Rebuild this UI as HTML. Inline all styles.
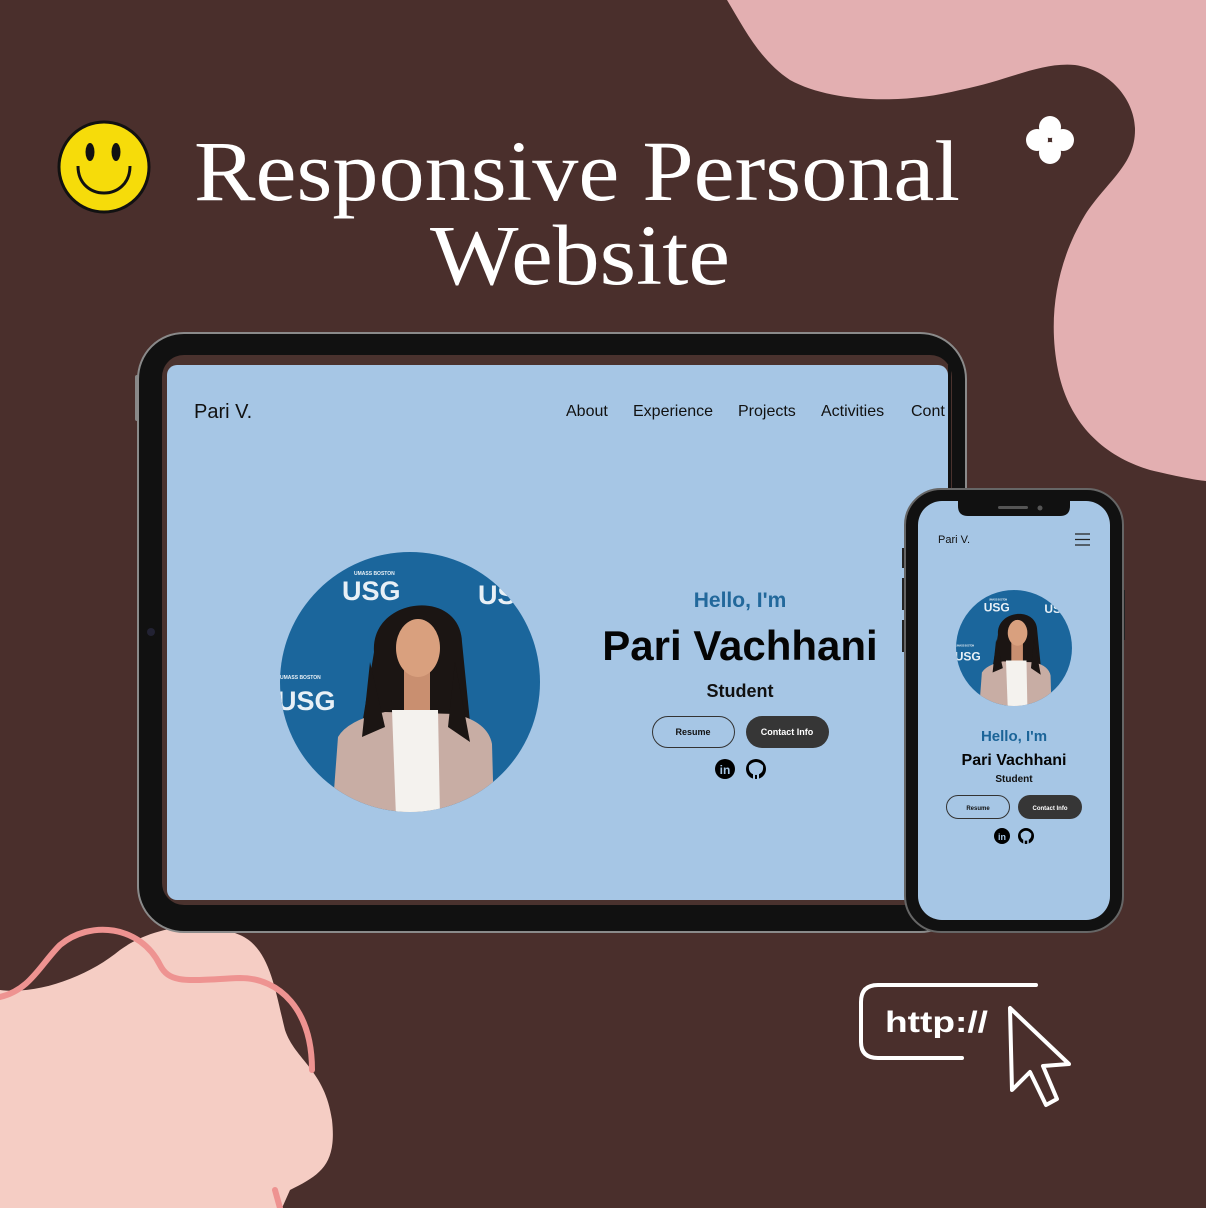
<!DOCTYPE html>
<html><head><meta charset="utf-8"><style>
html,body{margin:0;padding:0;background:#4a2f2c;}
svg{display:block}
</style></head><body>
<svg width="1206" height="1208" viewBox="0 0 1206 1208" xmlns="http://www.w3.org/2000/svg">
<defs>
<clipPath id="cb"><circle cx="0" cy="0" r="130"/></clipPath>
<g id="person">
<g clip-path="url(#cb)">
<rect x="-130" y="-130" width="260" height="260" fill="#1b669c"/>
<g fill="#e8f0f6" font-family="Liberation Sans, sans-serif" font-weight="bold">
<text x="-68" y="-82" font-size="27">USG</text>
<text x="-56" y="-107" font-size="5">UMASS BOSTON</text>
<text x="68" y="-78" font-size="27">USG</text>
<text x="-133" y="28" font-size="27">USG</text>
<text x="-130" y="-3" font-size="5">UMASS BOSTON</text>
</g>
<path d="M-36,-30 C-40,-85 50,-95 52,-40 L62,60 L-50,55 Z" fill="#1b1513"/>
<rect x="-6" y="-12" width="26" height="40" fill="#c98f70"/>
<ellipse cx="8" cy="-34" rx="22" ry="29" fill="#d9a07e"/>
<path d="M-78,135 L-72,55 Q-62,38 -25,30 L45,32 Q78,40 82,62 L84,135 Z" fill="#c8ada4"/>
<path d="M-18,28 L28,28 L30,135 L-14,135 Z" fill="#f4f2ee"/>
<path d="M-40,-20 L-48,55 L-25,45 Z M45,-20 L60,60 L38,45 Z" fill="#1b1513"/>
</g>
</g>
</defs>

<path d="M727,0 C745,30 760,60 790,80 C830,102 900,105 960,90 C1010,80 1040,62 1075,65 C1110,70 1135,100 1135,130 C1135,165 1108,180 1085,215 C1055,265 1048,320 1058,370 C1068,420 1100,455 1150,470 C1175,476 1195,480 1206,481 L1206,0 Z" fill="#e3afb1"/>
<path d="M0,990 C40,995 90,975 120,950 C150,928 200,918 240,935 C270,948 275,990 285,1030 C295,1060 325,1070 332,1120 C337,1165 320,1175 290,1190 L282,1208 L0,1208 Z" fill="#f5cdc4"/>
<path d="M0,997 C30,990 40,965 60,945 C90,920 140,925 160,965 C170,985 190,980 240,978 C280,978 312,1010 312,1070" fill="none" stroke="#ee9391" stroke-width="6" stroke-linecap="round"/>
<path d="M275,1190 L280,1208" fill="none" stroke="#ee9391" stroke-width="6" stroke-linecap="round"/>

<circle cx="104" cy="167" r="45" fill="#f6dc0a" stroke="#111" stroke-width="3"/>
<ellipse cx="90" cy="152" rx="4.5" ry="9" fill="#111"/>
<ellipse cx="116" cy="152" rx="4.5" ry="9" fill="#111"/>
<path d="M78,166 C78,202 130,202 130,166" fill="none" stroke="#111" stroke-width="3"/>

<g fill="#fff">
<circle cx="1050" cy="127" r="11"/>
<circle cx="1050" cy="153" r="11"/>
<circle cx="1037" cy="140" r="11"/>
<circle cx="1063" cy="140" r="11"/>
</g>

<g fill="#fff" font-family="Liberation Serif, serif" font-size="86" text-anchor="middle">
<text x="577" y="200" textLength="766" lengthAdjust="spacingAndGlyphs">Responsive Personal</text>
<text x="580" y="284" textLength="300" lengthAdjust="spacingAndGlyphs">Website</text>
</g>

<rect x="135" y="375" width="6" height="46" rx="2" fill="#888"/>
<rect x="138" y="333" width="828" height="599" rx="46" fill="#111" stroke="#8a8a8a" stroke-width="2"/>
<rect x="162" y="355" width="790" height="550" rx="22" fill="#4a322e"/>
<rect x="167" y="365" width="781" height="535" rx="10" fill="#a6c6e5"/>
<circle cx="151" cy="632" r="4" fill="#223"/>
<g font-family="Liberation Sans, sans-serif">
<text x="194" y="418" font-size="20" fill="#111">Pari V.</text>
<g font-size="16" fill="#111">
<text x="566" y="416">About</text>
<text x="633" y="416">Experience</text>
<text x="738" y="416">Projects</text>
<text x="821" y="416">Activities</text>
<text x="911" y="416">Cont</text>
</g>
</g>
<rect x="948" y="365" width="3" height="540" fill="#111"/>
<use href="#person" transform="translate(410,682)"/>
<g font-family="Liberation Sans, sans-serif" text-anchor="middle">
<text x="740" y="607" font-size="21" fill="#1b6498" font-weight="bold" opacity="0.95">Hello, I'm</text>
<text x="740" y="660" font-size="42" font-weight="bold" fill="#050505">Pari Vachhani</text>
<text x="740" y="697" font-size="18" font-weight="bold" fill="#111">Student</text>
<rect x="652.5" y="716.5" width="82" height="31" rx="15.5" fill="none" stroke="#333" stroke-width="1"/>
<text x="693" y="735" font-size="9" font-weight="bold" fill="#111">Resume</text>
<rect x="746" y="716" width="83" height="32" rx="16" fill="#363636"/>
<text x="787" y="735" font-size="9" font-weight="bold" fill="#fff">Contact Info</text>
</g>
<circle cx="725" cy="769" r="10" fill="#000"/>
<text x="725" y="774" font-family="Liberation Sans, sans-serif" font-size="12" font-weight="bold" fill="#a6c6e5" text-anchor="middle">in</text>
<circle cx="756" cy="769" r="10" fill="#000"/>
<path d="M750,766 Q756,760 762,766 Q763,773 756,774 Q749,773 750,766 Z M754,774 L754,779 M758,774 L758,779" fill="#a6c6e5" stroke="#a6c6e5" stroke-width="2"/>

<rect x="902" y="548" width="4" height="20" fill="#222"/>
<rect x="902" y="578" width="4" height="32" fill="#222"/>
<rect x="902" y="620" width="4" height="32" fill="#222"/>
<rect x="1121" y="590" width="4" height="50" fill="#222"/>
<rect x="905" y="489" width="218" height="443" rx="36" fill="#111" stroke="#666" stroke-width="2"/>
<rect x="918" y="501" width="192" height="419" rx="24" fill="#a6c6e5"/>
<path d="M958,499 L1070,499 L1070,506 Q1070,516 1060,516 L968,516 Q958,516 958,506 Z" fill="#111"/>
<rect x="998" y="506" width="30" height="3" rx="1.5" fill="#555"/>
<circle cx="1040" cy="508" r="2.5" fill="#555"/>
<text x="938" y="543" font-family="Liberation Sans, sans-serif" font-size="11" fill="#111">Pari V.</text>
<path d="M1075,534 H1090 M1075,539.5 H1090 M1075,545 H1090" stroke="#222" stroke-width="1.2"/>
<use href="#person" transform="translate(1014,648) scale(0.446)"/>
<g font-family="Liberation Sans, sans-serif" text-anchor="middle">
<text x="1014" y="741" font-size="15" font-weight="bold" fill="#1b6498">Hello, I'm</text>
<text x="1014" y="765" font-size="16" font-weight="bold" fill="#050505">Pari Vachhani</text>
<text x="1014" y="782" font-size="10" font-weight="bold" fill="#111">Student</text>
<rect x="946.5" y="795.5" width="63" height="23" rx="11.5" fill="none" stroke="#333" stroke-width="1"/>
<text x="978" y="810" font-size="6" font-weight="bold" fill="#111">Resume</text>
<rect x="1018" y="795" width="64" height="24" rx="12" fill="#363636"/>
<text x="1050" y="810" font-size="6" font-weight="bold" fill="#fff">Contact Info</text>
</g>
<circle cx="1002" cy="836" r="8" fill="#000"/>
<text x="1002" y="840" font-family="Liberation Sans, sans-serif" font-size="9" font-weight="bold" fill="#a6c6e5" text-anchor="middle">in</text>
<circle cx="1026" cy="836" r="8" fill="#000"/>
<path d="M1021.5,834 Q1026,829 1030.5,834 Q1031,839 1026,840 Q1021,839 1021.5,834 Z M1024,840 L1024,844 M1028,840 L1028,844" fill="#a6c6e5" stroke="#a6c6e5" stroke-width="1.5"/>

<path d="M1036,985 L878,985 Q861,985 861,1002 L861,1042 Q861,1058 878,1058 L962,1058" fill="none" stroke="#fff" stroke-width="4" stroke-linecap="round"/>
<text x="885" y="1032" font-family="Liberation Sans, sans-serif" font-size="30" font-weight="bold" fill="#fff" textLength="103" lengthAdjust="spacingAndGlyphs">http://</text>
<path d="M1010,1008 L1012,1090 L1030,1072 L1046,1105 L1057,1099 L1043,1066 L1069,1064 Z" fill="none" stroke="#fff" stroke-width="4" stroke-linejoin="round"/>
</svg>
</body></html>
